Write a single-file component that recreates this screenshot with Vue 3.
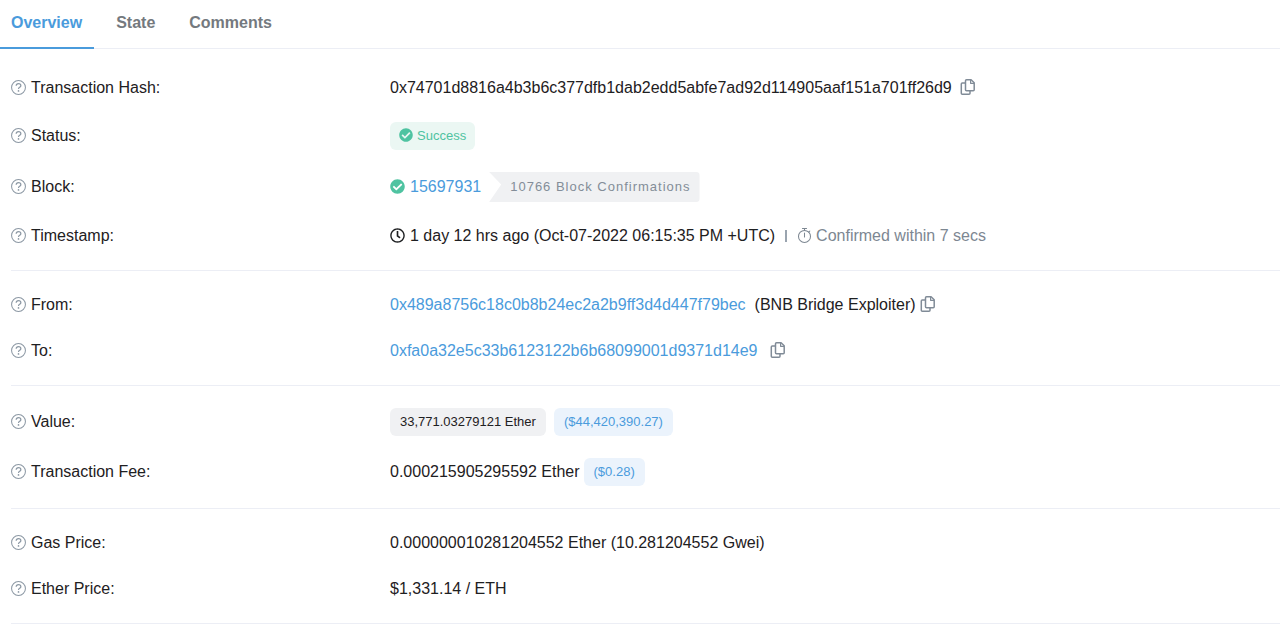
<script setup>
import { ref } from 'vue'

const tabs = ['Overview', 'State', 'Comments']
const active = ref('Overview')

const groups = [
  [
    { id: 'hash', label: 'Transaction Hash:' },
    { id: 'status', label: 'Status:' },
    { id: 'block', label: 'Block:' },
    { id: 'time', label: 'Timestamp:' },
  ],
  [
    { id: 'from', label: 'From:' },
    { id: 'to', label: 'To:' },
  ],
  [
    { id: 'value', label: 'Value:' },
    { id: 'fee', label: 'Transaction Fee:' },
  ],
  [
    { id: 'gas', label: 'Gas Price:' },
    { id: 'price', label: 'Ether Price:' },
  ],
]

const copy = (text) => navigator.clipboard?.writeText(text)

const hash = '0x74701d8816a4b3b6c377dfb1dab2edd5abfe7ad92d114905aaf151a701ff26d9'
const from = '0x489a8756c18c0b8b24ec2a2b9ff3d4d447f79bec'
const to = '0xfa0a32e5c33b6123122b6b68099001d9371d14e9'
</script>

<template>
  <svg class="defs" aria-hidden="true">
    <symbol id="i-help" viewBox="0 0 16 16">
      <circle cx="8" cy="8" r="7.4" fill="none" stroke="currentColor" stroke-width="1.1" />
      <path d="M5.500 6.200c.1-1.500 1.100-2.300 2.500-2.300s2.500.8 2.500 2.100c0 1.900-2.500 1.800-2.500 3.500" fill="none" stroke="currentColor" stroke-width="1.300" />
      <circle cx="8" cy="11.600" r=".9" fill="currentColor" />
    </symbol>
    <symbol id="i-check" viewBox="0 0 512 512">
      <path fill="currentColor" d="M504 256c0 136.967-111.033 248-248 248S8 392.967 8 256 119.033 8 256 8s248 111.033 248 248zM227.314 387.314l184-184c6.248-6.248 6.248-16.379 0-22.627l-22.627-22.627c-6.248-6.249-16.379-6.249-22.628 0L216 308.118l-70.059-70.059c-6.248-6.248-16.379-6.248-22.628 0l-22.627 22.627c-6.248 6.248-6.248 16.379 0 22.627l104 104c6.249 6.249 16.379 6.249 22.628.001z" />
    </symbol>
    <symbol id="i-clock" viewBox="0 0 512 512">
      <path fill="currentColor" d="M256 8C119 8 8 119 8 256s111 248 248 248 248-111 248-248S393 8 256 8zm0 448c-110.5 0-200-89.5-200-200S145.500 56 256 56s200 89.5 200 200-89.5 200-200 200zm61.8-104.4l-84.9-61.7c-3.1-2.3-4.9-5.9-4.9-9.7V116c0-6.600 5.4-12 12-12h32c6.600 0 12 5.4 12 12v141.700l66.800 48.600c5.400 3.900 6.500 11.400 2.600 16.800L334.600 349c-3.900 5.300-11.400 6.500-16.800 2.600z" />
    </symbol>
    <symbol id="i-timer" viewBox="0 0 16 16">
      <g fill="none" stroke="currentColor" stroke-width="1.100">
        <circle cx="8" cy="9" r="6.400" />
        <path d="M5.800.6h4.400M8 .6v2M12.500 4.400l1.200-1.200M8 5.400v4.200" stroke-linecap="round" />
      </g>
    </symbol>
    <symbol id="i-copy" viewBox="0 0 16 16">
      <g fill="none" stroke="currentColor" stroke-width="1.500" stroke-linejoin="round">
        <path d="M6.500.8h4.600l3.100 3v6.900q0 1-1 1H6.500q-1 0-1-1V1.800q0-1 1-1z" />
        <path d="M10.600 1v3.300h3.400" stroke-width="1.200" />
        <path d="M5.500 4H2.300q-1 0-1 1v9.200q0 1 1 1H9q1 0 1-1v-2.500" />
      </g>
    </symbol>
  </svg>

  <main class="page">
    <nav class="tabs" role="tablist">
      <button
        v-for="t in tabs"
        :key="t"
        type="button"
        role="tab"
        class="tab"
        :class="{ active: t === active }"
        :aria-selected="t === active"
        @click="active = t"
      >{{ t }}</button>
    </nav>

    <div class="details">
      <dl v-for="(rows, i) in groups" :key="i" class="group">
        <div v-for="row in rows" :key="row.id" class="row">
          <dt class="label">
            <svg class="icon muted"><use href="#i-help" /></svg>
            <span>{{ row.label }}</span>
          </dt>

          <dd v-if="row.id === 'hash'" class="value">
            <span>{{ hash }}</span>
            <button type="button" class="copy spaced" aria-label="Copy transaction hash" @click="copy(hash)">
              <svg class="icon-copy"><use href="#i-copy" /></svg>
            </button>
          </dd>

          <dd v-else-if="row.id === 'status'" class="value">
            <span class="badge success"><svg class="icon-small"><use href="#i-check" /></svg>Success</span>
          </dd>

          <dd v-else-if="row.id === 'block'" class="value">
            <svg class="icon green"><use href="#i-check" /></svg>
            <a class="link after-icon" href="#block">15697931</a>
            <span class="confirmations">10766 Block Confirmations</span>
          </dd>

          <dd v-else-if="row.id === 'time'" class="value">
            <svg class="icon"><use href="#i-clock" /></svg>
            <span class="after-icon">1 day 12 hrs ago (Oct-07-2022 06:15:35 PM +UTC)</span>
            <span class="divider"></span>
            <span class="confirmed"><svg class="icon"><use href="#i-timer" /></svg>Confirmed within 7 secs</span>
          </dd>

          <dd v-else-if="row.id === 'from'" class="value">
            <a class="link" href="#from">{{ from }}</a>
            <span class="name">(BNB Bridge Exploiter)</span>
            <button type="button" class="copy" aria-label="Copy sender address" @click="copy(from)">
              <svg class="icon-copy"><use href="#i-copy" /></svg>
            </button>
          </dd>

          <dd v-else-if="row.id === 'to'" class="value">
            <a class="link" href="#to">{{ to }}</a>
            <button type="button" class="copy wide" aria-label="Copy recipient address" @click="copy(to)">
              <svg class="icon-copy"><use href="#i-copy" /></svg>
            </button>
          </dd>

          <dd v-else-if="row.id === 'value'" class="value badges">
            <span class="badge gray">33,771.03279121 Ether</span>
            <span class="badge blue">($44,420,390.27)</span>
          </dd>

          <dd v-else-if="row.id === 'fee'" class="value tight">
            <span>0.000215905295592 Ether</span>
            <span class="badge blue">($0.28)</span>
          </dd>

          <dd v-else-if="row.id === 'gas'" class="value">0.000000010281204552 Ether (10.281204552 Gwei)</dd>
          <dd v-else class="value">$1,331.14 / ETH</dd>
        </div>
      </dl>
    </div>
  </main>
</template>

<style>
body {
  margin: 0;
  background: #fff;
}
</style>

<style scoped>
.defs {
  position: absolute;
  width: 0;
  height: 0;
}
.page {
  font-family: "Liberation Sans", Arial, sans-serif;
  font-size: 16px;
  line-height: 24px;
  color: #1e2022;
}
.tabs {
  display: flex;
  gap: 10px;
  border-bottom: 1px solid #eceef5;
}
.tab {
  margin: 0 0 -1px;
  padding: 11px 12px 12px;
  border: 0;
  border-bottom: 2px solid transparent;
  background: none;
  font: inherit;
  font-weight: 700;
  color: #74797e;
  cursor: pointer;
}
.tab:first-child {
  padding-left: 11px;
}
.tab.active {
  color: #4a9bdc;
  border-bottom-color: #4a9bdc;
}
.details {
  padding: 5px 0 0 11px;
}
.group {
  display: flex;
  flex-direction: column;
  gap: 22px;
  margin: 0;
  padding: 22px 0;
  border-bottom: 1px solid #eceef5;
}
.row {
  display: grid;
  grid-template-columns: 379px 1fr;
  align-items: center;
}
.label,
.value {
  display: flex;
  align-items: center;
  margin: 0;
}
.label {
  gap: 5px;
}
.icon {
  width: 15px;
  height: 15px;
  margin-bottom: 2px;
  flex: none;
}
.icon-small {
  width: 14px;
  height: 14px;
  margin-bottom: 2px;
  flex: none;
}
.muted {
  color: #8c98a4;
}
.green {
  color: #4fc3a1;
}
.after-icon {
  margin-left: 5px;
}
.link {
  color: #4a9bdc;
  text-decoration: none;
}
.copy {
  display: flex;
  margin: 0 0 2px 4px;
  padding: 0;
  border: 0;
  background: none;
  color: #808b97;
  cursor: pointer;
}
.copy.spaced {
  margin-left: 8px;
}
.copy.wide {
  margin-left: 13px;
}
.icon-copy {
  width: 16px;
  height: 16px;
}
.badge {
  display: inline-flex;
  align-items: center;
  gap: 4px;
  padding: 2px 10px;
  border-radius: 6px;
  font-size: 13px;
}
.success {
  padding: 2px 9px;
  color: #4fc3a1;
  background: #ebf7f3;
}
.gray {
  background: #f0f1f3;
}
.blue {
  color: #4a9bdc;
  background: #ebf3fc;
}
.badges {
  gap: 8px;
}
.tight {
  gap: 4px;
}
.confirmations {
  margin-left: 8px;
  padding: 3px 9px 3px 21px;
  border-radius: 0 4px 4px 0;
  background: #f0f1f3;
  clip-path: polygon(0 0, 100% 0, 100% 100%, 0 100%, 12px 42%);
  color: #838d98;
  font-size: 13px;
  letter-spacing: 1px;
}
.divider {
  width: 2px;
  height: 12px;
  margin: 0 10px;
  background: #9aa4af;
}
.confirmed {
  display: flex;
  align-items: center;
  gap: 4px;
  color: #7d8792;
}
.name {
  margin-left: 9px;
}
</style>
